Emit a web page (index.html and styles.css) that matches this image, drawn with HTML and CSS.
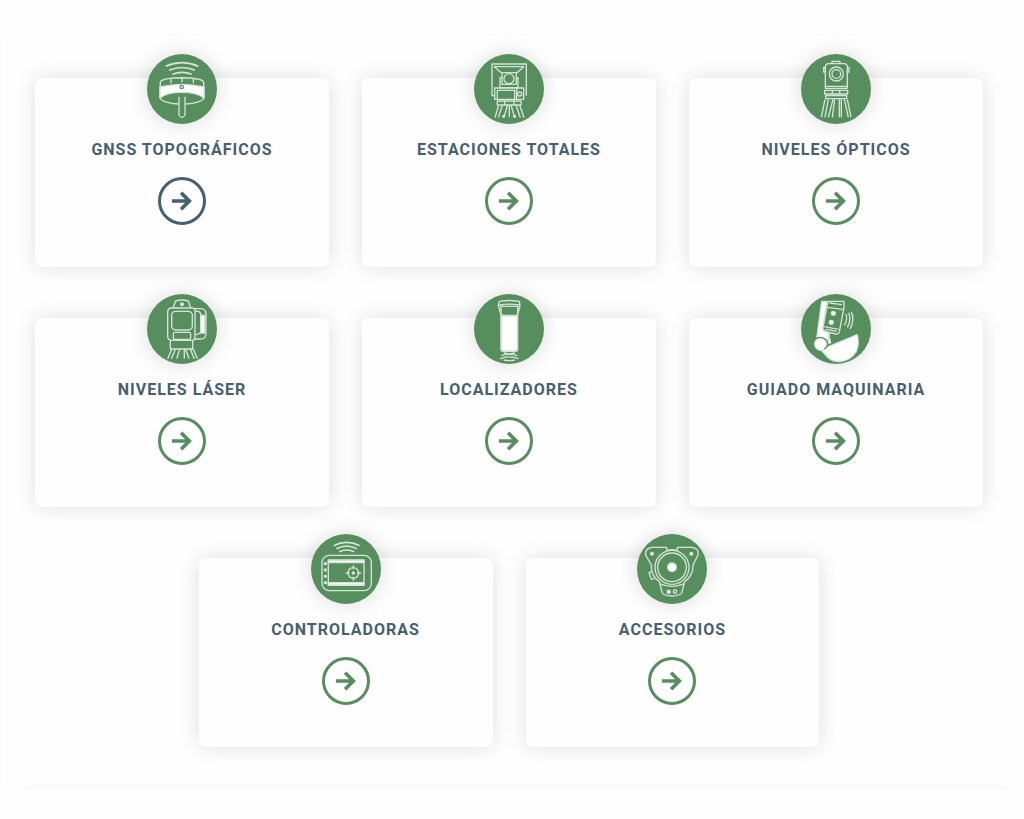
FILE: index.html
```
<!DOCTYPE html>
<html lang="es">
<head>
    <meta charset="utf-8">
    <title>Productos</title>
    <link rel="stylesheet" href="styles.css">
</head>
<body>
    <svg class="sprite" aria-hidden="true">
        <symbol id="arrow" viewBox="0 0 24 24">
            <path d="M1 12h18M11 3l9 9-9 9"/>
        </symbol>
    </svg>

    <main class="products">
        <article class="card">
            <svg class="card-icon" viewBox="45 40 210 210" aria-hidden="true">
                <path class="wave" d="M101 77q49-22 98 0M111 89q39-17 78 0M121 101q29-12 58 0"/>
                <path d="M84 137v34c3 12 31 18 54 19M216 137v34c-3 12-31 18-54 19M85 136v-12c10-17 120-17 130 0v12M117 128v-15M150 125v-14M184 128v-15"/>
                <path class="solid" d="M84 139q66-16 132 0v34c-22-24-110-24-132 0z"/>
                <circle class="cut" cx="149" cy="139" r="5"/>
                <path d="M141 168v55q9 15 18 0v-55"/>
            </svg>
            <h2 class="card-title">GNSS TOPOGRÁFICOS</h2>
            <a class="card-link active" href="#gnss" aria-label="GNSS topográficos"><svg><use href="#arrow"/></svg></a>
        </article>

        <article class="card">
            <svg class="card-icon" viewBox="45 40 210 210" aria-hidden="true">
                <path d="M106 165h-7V70h103v95M106 78h88l-20 18h-47zM129 96v35h43V96M129 111h-6v30h54v-30h-5"/>
                <circle cx="150" cy="114" r="15"/>
                <path d="M107 142h87v34h-87zM115 149h52v27M115 149v27M173 142v34"/>
                <circle cx="182" cy="160" r="6"/>
                <path d="M115 181h71v12h-71zM137 181v12M165 181v12M119 193l-11 38M130 193l-12 38M146 193l-10 32M151 193v36M156 193l9 32M171 193l13 38M182 193l13 38"/>
                <circle class="solid" cx="134" cy="227" r="3"/>
                <circle class="solid" cx="167" cy="227" r="3"/>
            </svg>
            <h2 class="card-title">ESTACIONES TOTALES</h2>
            <a class="card-link" href="#estaciones" aria-label="Estaciones totales"><svg><use href="#arrow"/></svg></a>
        </article>

        <article class="card">
            <svg class="card-icon" viewBox="45 40 210 210" aria-hidden="true">
                <path d="M118 143V79q1-10 10-10h46q10 0 10 10v64zM138 68v-6h24v6M118 80h-5v14h5M184 80h5v14h-5M118 137h66"/>
                <circle cx="151" cy="100" r="21"/>
                <circle cx="151" cy="100" r="13"/>
                <path d="M116 149h69v11h-69zM119 165h63v9h-63zM139 149v11M161 149v11"/>
                <path d="M117 176l-11 54M127 176l-10 54M141 176l-14 54M146 176l-7 54M160 176v54M166 176v54M175 176l12 54M184 176l11 54"/>
            </svg>
            <h2 class="card-title">NIVELES ÓPTICOS</h2>
            <a class="card-link" href="#opticos" aria-label="Niveles ópticos"><svg><use href="#arrow"/></svg></a>
        </article>

        <article class="card">
            <svg class="card-icon" viewBox="45 40 210 210" aria-hidden="true">
                <path d="M123 82l8-21q19-6 38 0l7 21"/>
                <circle class="solid" cx="150" cy="71" r="4"/>
                <path d="M119 82h63q7 0 7 9v78q0 10-8 10h-62q-12 0-12-12V94q0-12 12-12z"/>
                <rect x="119" y="92" width="62" height="56" rx="12"/>
                <rect x="124" y="155" width="52" height="21" rx="5"/>
                <path d="M189 84h18q15 0 15 18v57q-1 16-17 16h-16M189 92h11q7 4 7 14v46q-4 10-18 10"/>
                <path class="solid" d="M206 104h12v53h-12z"/>
                <path d="M115 181v24h67v-24M119 206l-12 28M130 206l-12 28M143 206l-9 28M157 206v28M161 206l10 28M175 206l12 28M184 206l12 28"/>
            </svg>
            <h2 class="card-title">NIVELES LÁSER</h2>
            <a class="card-link" href="#laser" aria-label="Niveles láser"><svg><use href="#arrow"/></svg></a>
        </article>

        <article class="card">
            <svg class="card-icon" viewBox="45 40 210 210" aria-hidden="true">
                <path d="M121 62q29-5 60 0l2 12-7 29v103q0 6-6 6h-38q-6 0-6-6V103l-8-29zM121 73q30-5 60 0M126 77h50v22q-2 5-8 5h-34q-7 0-8-5z"/>
                <path class="solid" d="M127 106h48v97q0 8-8 8h-32q-8 0-8-8z"/>
                <path d="M134 217q17 5 34 0M127 225q24-8 48 0M123 234q28-11 56 0M134 238q17 4 34 0"/>
            </svg>
            <h2 class="card-title">LOCALIZADORES</h2>
            <a class="card-link" href="#localizadores" aria-label="Localizadores"><svg><use href="#arrow"/></svg></a>
        </article>

        <article class="card">
            <svg class="card-icon" viewBox="45 40 210 210" aria-hidden="true">
                <path class="solid" d="M107 62h16l-13 84 20 13-2 16-16 12-20-14z"/>
                <path d="M126 62h48v18l-14 73q-2 9-11 7l-34-8q-6-2-5-9zM130 67l38 5M124 80l46 6M115 138l42 8M120 146l32 6"/>
                <circle class="solid" cx="142" cy="98" r="6"/>
                <circle class="solid" cx="136" cy="125" r="6"/>
                <path d="M180 100q6 15-5 34M188 96q9 20-4 44M196 93q11 25-4 52"/>
                <path class="solid" d="M128 160l-3 30 9-4z"/>
                <path class="solid" d="M104 207l20-8 90-37q7 30-4 52c-22 34-66 36-87 14z"/>
                <circle class="solid" cx="105" cy="190" r="19"/>
                <path class="gap" d="M87 176c16-14 41 0 37 18q-2 8-10 11"/>
            </svg>
            <h2 class="card-title">GUIADO MAQUINARIA</h2>
            <a class="card-link" href="#guiado" aria-label="Guiado maquinaria"><svg><use href="#arrow"/></svg></a>
        </article>

        <article class="card">
            <svg class="card-icon" viewBox="45 38 210 210" aria-hidden="true">
                <path class="wave" d="M113 73q39-20 78 0M121 82q31-15 62 0M129 91q23-10 46 0"/>
                <rect x="78" y="102" width="148" height="106" rx="22"/>
                <path d="M97 116h107v76H97z"/>
                <path class="solid" d="M97 117h107v7H97zM97 184h107v7H97z"/>
                <circle class="solid" cx="88" cy="127" r="3"/>
                <circle class="solid" cx="88" cy="146" r="3"/>
                <circle class="solid" cx="88" cy="165" r="3"/>
                <circle class="solid" cx="88" cy="184" r="3"/>
                <circle cx="172" cy="155" r="16"/>
                <circle class="solid" cx="172" cy="155" r="3"/>
                <path d="M172 132v12M172 166v12M149 155h12M183 155h12"/>
            </svg>
            <h2 class="card-title">CONTROLADORAS</h2>
            <a class="card-link" href="#controladoras" aria-label="Controladoras"><svg><use href="#arrow"/></svg></a>
        </article>

        <article class="card">
            <svg class="card-icon" viewBox="48 38 210 210" aria-hidden="true">
                <circle cx="153" cy="138" r="51"/>
                <circle cx="153" cy="138" r="43"/>
                <circle class="solid" cx="153" cy="138" r="13"/>
                <path d="M137 87v-9H92q-21 4-18 23l17 30q-2 33 24 50l9 34q4 8 29 9 24-1 29-9l9-34q26-18 25-50l15-30q4-19-17-23h-45v9M137 87q16-4 32 0M115 187q38 16 76 0"/>
                <path d="M92 150l-8 4 7 20 9-2"/>
                <circle class="solid" cx="93" cy="97" r="4"/>
                <circle class="solid" cx="211" cy="97" r="4"/>
                <path class="solid" d="M139 207h8v8h-8z"/>
                <circle cx="162" cy="211" r="5"/>
            </svg>
            <h2 class="card-title">ACCESORIOS</h2>
            <a class="card-link" href="#accesorios" aria-label="Accesorios"><svg><use href="#arrow"/></svg></a>
        </article>
    </main>
</body>
</html>
```
FILE: styles.css
```
* {
    box-sizing: border-box;
    margin: 0;
    padding: 0;
}

body {
    padding: 34px 0 30px 6px;
    font-family: Roboto, "Liberation Sans", Arial, sans-serif;
    background-color: #fefefe;
    color: #46606f;
}

.sprite {
    display: none;
}

.products {
    display: flex;
    flex-wrap: wrap;
    justify-content: center;
    gap: 51px 33px;
    padding: 43px 41px 41px 28px;
    border: 1px solid #f9f9f9;
    border-right: none;
    background: linear-gradient(to top, #f9f9f9, #fefefe) bottom / 96% 8px no-repeat;
}

.card {
    flex: 0 0 calc((100% - 66px) / 3);
    display: flex;
    flex-direction: column;
    align-items: center;
    padding-bottom: 42px;
    background: #fefefe;
    border-radius: 7px;
    box-shadow: 0 0 20px rgba(0, 0, 0, 0.12);
}

.card-icon {
    width: 70px;
    height: 70px;
    margin-top: -24px;
    border-radius: 50%;
    background: #568f5d;
    box-shadow: 0 0 20px rgba(0, 0, 0, 0.14);
    fill: none;
    stroke: #d5e4d7;
    stroke-width: 4;
    stroke-linejoin: round;
}

.card-icon .wave {
    stroke-width: 5;
}

.card-icon .solid {
    fill: #fefefe;
}

.card-icon .cut {
    fill: #fefefe;
    stroke: #568f5d;
}

.card-icon .gap {
    stroke: #568f5d;
}

.card-title {
    margin: 16px 0 17px;
    font-size: 16px;
    line-height: 20px;
    font-weight: bold;
    letter-spacing: 1px;
}

.card-link {
    display: flex;
    align-items: center;
    justify-content: center;
    width: 48px;
    height: 48px;
    border: 3px solid currentColor;
    border-radius: 50%;
    color: #568f5d;
}

.card-link:hover,
.card-link.active {
    color: #46606f;
}

.card-link svg {
    width: 22px;
    height: 22px;
    fill: none;
    stroke: currentColor;
    stroke-width: 4;
}
```
